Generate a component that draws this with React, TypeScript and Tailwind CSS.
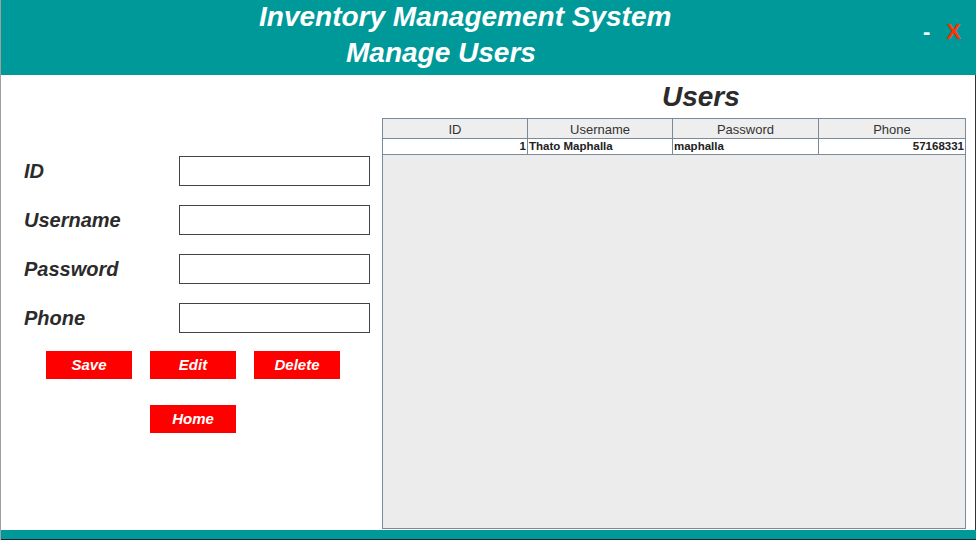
const font = "font-['Liberation_Sans',Arial,sans-serif]"

const fields = ['ID', 'Username', 'Password', 'Phone']

function RedButton({ label }: { label: string }) {
  return (
    <button className="flex h-[28px] w-[86px] items-center justify-center bg-[#ff0000] pt-px text-[15px] font-bold italic text-white">
      {label}
    </button>
  )
}

function UsersTable() {
  const cols = ['ID', 'Username', 'Password', 'Phone']
  return (
    <div className="flex h-[411px] w-[584px] flex-col border border-[#7a8a99] bg-[#ececec]">
      <div className="grid h-[20px] grid-cols-[145px_145px_146px_146px] border-b border-[#7a8a99] bg-[#eeeeee]">
        {cols.map((c, i) => (
          <div
            key={c}
            className={`flex items-center justify-center pt-px text-[13px] leading-none text-[#333] ${i < 3 ? 'border-r border-[#7a8a99]' : ''}`}
          >
            {c}
          </div>
        ))}
      </div>
      <div className="grid h-[16px] grid-cols-[145px_145px_146px_146px] border-b border-[#7a8a99] bg-white text-[11.5px] font-bold leading-none text-[#222]">
        <div className="flex items-center justify-end border-r border-[#7a8a99] pr-px">1</div>
        <div className="flex items-center border-r border-[#7a8a99] pl-px">Thato Maphalla</div>
        <div className="flex items-center border-r border-[#7a8a99] pl-px">maphalla</div>
        <div className="flex items-center justify-end pr-px">57168331</div>
      </div>
    </div>
  )
}

export default function App() {
  return (
    <div className={`${font} flex h-[540px] w-[976px] flex-col overflow-hidden border-l border-[#a0a0a0] bg-white`}>
      <header className="flex h-[75px] shrink-0 bg-[#009999] text-white">
        <div className="flex flex-1 flex-col gap-[4px] pt-px text-[28px] font-bold italic leading-[32px]">
          <div className="pl-[258px]">Inventory Management System</div>
          <div className="pl-[345px]">Manage Users</div>
        </div>
        <div className="flex items-start gap-[16px] pr-[15px] pt-[20px] text-[22px] font-bold leading-[24px]">
          <span>-</span>
          <span className="text-[#ff3300]">X</span>
        </div>
      </header>

      <main className="flex flex-1 border-r border-[#333]">
        <section className="flex w-[381px] flex-col pt-[81px]">
          <div className="flex flex-col gap-[19px]">
            {fields.map((f) => (
              <div key={f} className="flex h-[30px] items-center">
                <span className="w-[178px] pb-px pl-[23px] text-[20px] font-bold italic text-[#2b2b2b]">{f}</span>
                <div className="h-[30px] w-[191px] border border-[#444] bg-white" />
              </div>
            ))}
          </div>
          <div className="mt-[18px] flex gap-[18px] pl-[45px]">
            <RedButton label="Save" />
            <RedButton label="Edit" />
            <RedButton label="Delete" />
          </div>
          <div className="mt-[26px] flex pl-[149px]">
            <RedButton label="Home" />
          </div>
        </section>

        <section className="flex flex-col">
          <h1 className="pl-[280px] pt-[6px] text-[28px] font-bold italic leading-[32px] text-[#2b2b2b]">Users</h1>
          <div className="mt-[5px]">
            <UsersTable />
          </div>
        </section>
      </main>

      <footer className="h-[10px] shrink-0 border-b border-[#222] bg-[#009999]" />
    </div>
  )
}
